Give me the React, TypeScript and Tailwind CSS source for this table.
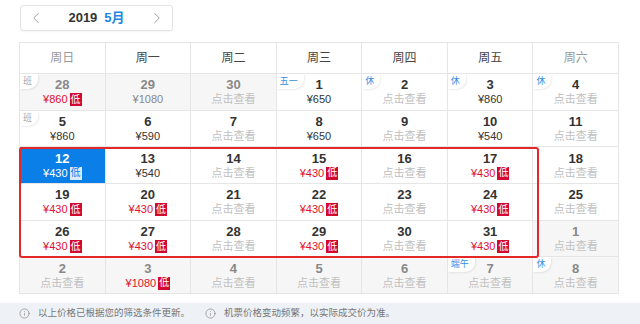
import React from 'react';
import { ChevronLeft, ChevronRight, Info } from 'lucide-react';

type Day = {
  d: number;
  price?: string;
  low?: boolean;
  other?: boolean;
  tag?: string;
  tagGray?: boolean;
  selected?: boolean;
};

const weeks: Day[][] = [
  [
    { d: 28, other: true, price: '¥860', low: true, tag: '班', tagGray: true },
    { d: 29, other: true, price: '¥1080' },
    { d: 30, other: true },
    { d: 1, price: '¥650', tag: '五一' },
    { d: 2, tag: '休' },
    { d: 3, price: '¥860', tag: '休' },
    { d: 4, tag: '休' },
  ],
  [
    { d: 5, price: '¥860', tag: '班', tagGray: true },
    { d: 6, price: '¥590' },
    { d: 7 },
    { d: 8, price: '¥650' },
    { d: 9 },
    { d: 10, price: '¥540' },
    { d: 11 },
  ],
  [
    { d: 12, price: '¥430', low: true, selected: true },
    { d: 13, price: '¥540' },
    { d: 14 },
    { d: 15, price: '¥430', low: true },
    { d: 16 },
    { d: 17, price: '¥430', low: true },
    { d: 18 },
  ],
  [
    { d: 19, price: '¥430', low: true },
    { d: 20, price: '¥430', low: true },
    { d: 21 },
    { d: 22, price: '¥430', low: true },
    { d: 23 },
    { d: 24, price: '¥430', low: true },
    { d: 25 },
  ],
  [
    { d: 26, price: '¥430', low: true },
    { d: 27, price: '¥430', low: true },
    { d: 28 },
    { d: 29, price: '¥430', low: true },
    { d: 30 },
    { d: 31, price: '¥430', low: true },
    { d: 1, other: true },
  ],
  [
    { d: 2, other: true },
    { d: 3, other: true, price: '¥1080', low: true },
    { d: 4, other: true },
    { d: 5, other: true },
    { d: 6, other: true },
    { d: 7, other: true, tag: '端午' },
    { d: 8, other: true, tag: '休' },
  ],
];

const heads = ['周日', '周一', '周二', '周三', '周四', '周五', '周六'];

const Cell = ({ day }: { day: Day }) => {
  const bg = day.selected ? 'bg-[#0a7fe8]' : day.other ? 'bg-[#f6f6f6]' : 'bg-white';
  const num = day.selected ? 'text-white' : day.other ? 'text-[#888]' : 'text-[#333]';
  let price = 'text-[#333]';
  if (day.selected) price = 'text-white';
  else if (day.low) price = 'text-[#e0102f]';
  else if (day.other) price = 'text-[#888]';

  return (
    <div className={`relative h-[36.7px] border-r border-b border-[#e6e6e6] flex flex-col items-center justify-center ${bg}`}>
      {day.tag && (
        <span
          className={`absolute left-0 top-0 h-[15px] pl-[3px] pr-[6px] bg-white rounded-br-[10px] shadow-[1px_1px_2px_rgba(0,0,0,0.08)] text-[9px] leading-[15px] ${
            day.tagGray ? 'text-[#aaa]' : 'text-[#3a8ee6]'
          }`}
        >
          {day.tag}
        </span>
      )}
      <span className={`text-[13px] leading-[15px] font-bold ${num}`}>{day.d}</span>
      {day.price ? (
        <span className={`flex items-center gap-[2px] text-[11px] leading-[13px] mt-[1px] ${price}`}>
          {day.price}
          {day.low && (
            <span
              className={`inline-flex w-[12px] h-[13px] items-center justify-center text-[10px] leading-none ${
                day.selected ? 'bg-[#d8ebfd] text-[#0a7fe8]' : 'bg-[#d3082e] text-white'
              }`}
            >
              低
            </span>
          )}
        </span>
      ) : (
        <span className="text-[11px] leading-[13px] mt-[1px] text-[#c0c0c0]">点击查看</span>
      )}
    </div>
  );
};

const App = () => {
  return (
    <div className="w-[640px] h-[324px] bg-white overflow-hidden relative font-['Liberation_Sans','Noto_Sans_CJK_SC',sans-serif]">
      <div className="pt-[5px] pl-[20px]">
        <div className="w-[153px] h-[26px] border border-[#e3e3e3] rounded-[3px] flex items-center justify-between px-[6px] shadow-[0_1px_2px_rgba(0,0,0,0.04)]">
          <ChevronLeft size={18} strokeWidth={1.3} className="text-[#9a9a9a]" />
          <div className="flex items-baseline gap-[7px] font-bold text-[13px]">
            <span className="text-[#333]">2019</span>
            <span className="text-[#1d86e8]">5月</span>
          </div>
          <ChevronRight size={18} strokeWidth={1.3} className="text-[#9a9a9a]" />
        </div>
      </div>

      <div className="relative ml-[19px] mt-[11px] w-[600px] border-l border-t border-[#e6e6e6]">
        <div className="grid grid-cols-7">
          {heads.map((h, i) => (
            <div
              key={h}
              className={`h-[31px] border-r border-b border-[#e6e6e6] flex items-center justify-center text-[12px] ${
                i === 0 || i === 6 ? 'text-[#999]' : 'text-[#444]'
              }`}
            >
              {h}
            </div>
          ))}
          {weeks.flat().map((day, i) => (
            <Cell key={i} day={day} />
          ))}
        </div>
        <div className="absolute left-[-1px] top-[104px] w-[520px] h-[111px] border-2 border-[#e42828] rounded-[3px] pointer-events-none" />
      </div>

      <div className="absolute left-0 right-0 bottom-0 h-[21px] bg-[#eef1f5] flex items-center text-[9.5px] text-[#777] whitespace-nowrap">
        <div className="flex items-center gap-[8px] pl-[19px] w-[205px]">
          <Info size={11} strokeWidth={1.5} className="text-[#888]" />
          <span>以上价格已根据您的筛选条件更新。</span>
        </div>
        <div className="flex items-center gap-[8px]">
          <Info size={11} strokeWidth={1.5} className="text-[#888]" />
          <span>机票价格变动频繁，以实际成交价为准。</span>
        </div>
      </div>
    </div>
  );
};

export default App;
